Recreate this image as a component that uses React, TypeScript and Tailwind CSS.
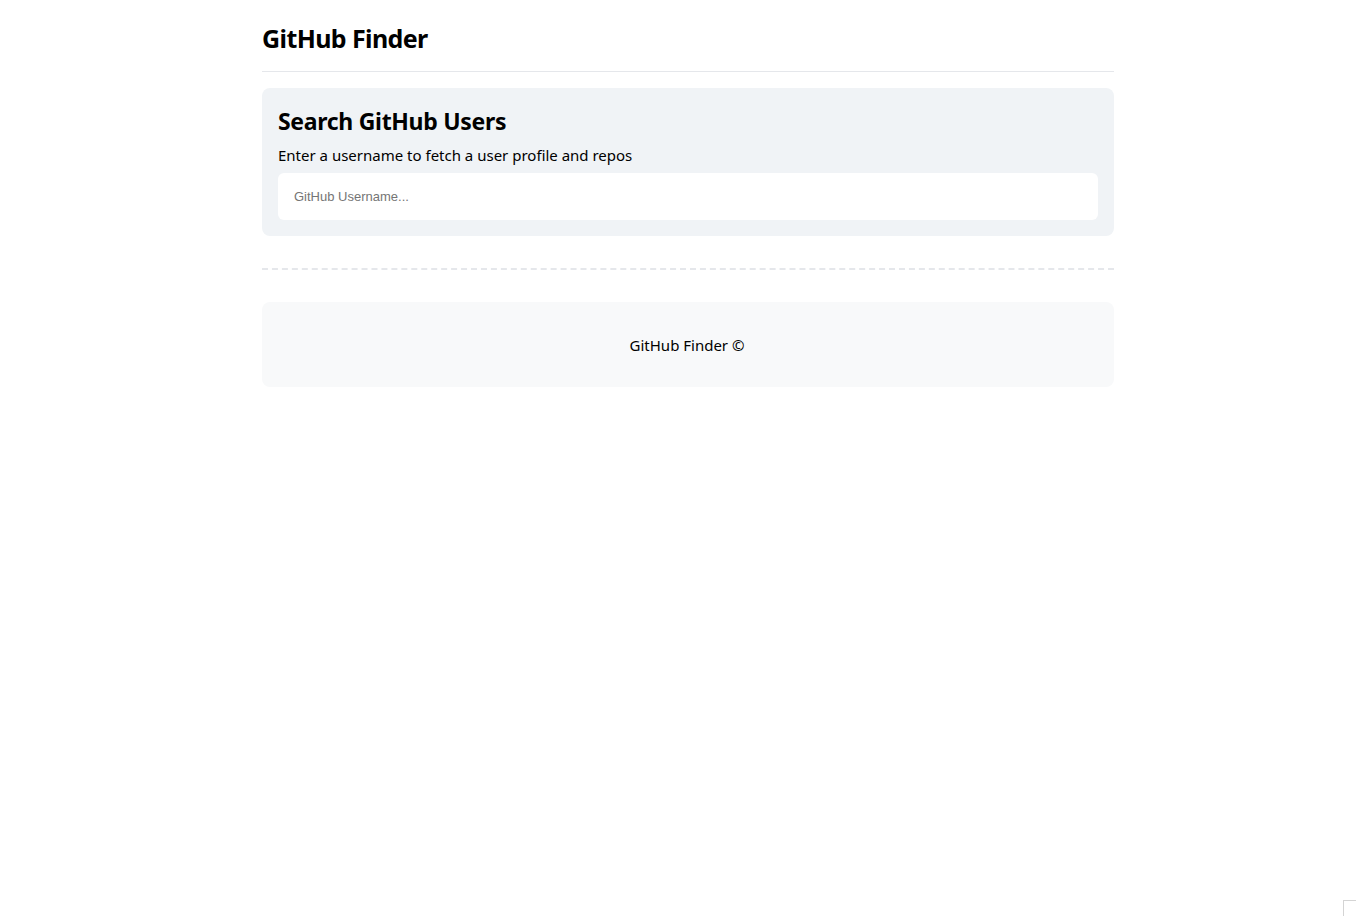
import React from 'react';

const App: React.FC = () => {
  return (
    <div className="min-h-screen bg-white text-black font-['Noto_Sans',sans-serif]">
      <div className="max-w-[872px] mx-auto pl-5">
        <header className="h-[72px] flex items-center border-b border-[#e5e7eb]">
          <h1 className="text-[25px] font-bold leading-none tracking-[-0.6px] mt-[6px]">GitHub Finder</h1>
        </header>

        <section className="mt-4 bg-[#f0f3f6] rounded-lg px-4 pt-4 pb-4">
          <h2 className="text-[23px] font-bold leading-[30px] tracking-[-0.3px] mt-[2px]">Search GitHub Users</h2>
          <p className="text-[15px] leading-[22px] mt-[8px]">
            Enter a username to fetch a user profile and repos
          </p>
          <input
            type="text"
            placeholder="GitHub Username..."
            className="mt-[7px] w-full h-[47px] bg-white rounded-md px-4 text-[13px] font-['Liberation_Sans',sans-serif] outline-none placeholder:text-[#757575]"
          />
        </section>

        <div className="mt-8 border-t-2 border-dashed border-[#e5e7eb]" />

        <footer className="mt-8 bg-[#f8f9fa] rounded-lg h-[85px] flex items-center justify-center">
          <p className="text-[15px] pr-[2px] mt-[2px]">GitHub Finder ©</p>
        </footer>
      </div>

      <div className="fixed right-0 bottom-0 w-[13px] h-[16px] border-l border-t border-[#d4d4d4] bg-white" />
    </div>
  );
};

export default App;
